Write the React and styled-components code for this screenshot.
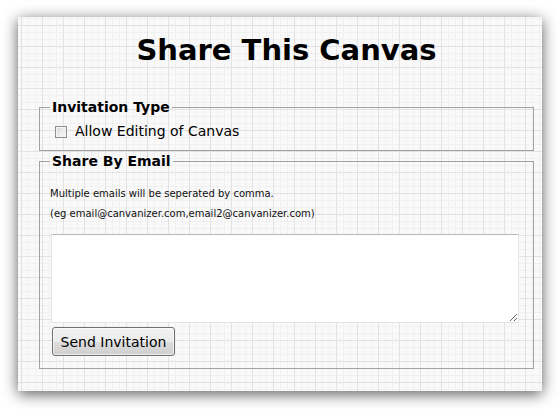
import React, { useState } from 'react';
import styled, { createGlobalStyle } from 'styled-components';

const GlobalStyle = createGlobalStyle`
  html, body {
    margin: 0;
    padding: 0;
    background: #ffffff;
  }
  body {
    font-family: "DejaVu Sans", Verdana, sans-serif;
    color: #000;
  }
`;

const Page = styled.div`
  width: 560px;
  height: 409px;
  padding: 17px 0 0 18px;
  box-sizing: border-box;
`;

const Panel = styled.div`
  width: 524px;
  height: 374px;
  box-sizing: border-box;
  padding: 15px 8px 0 21px;
  background-color: #f9f9f9;
  background-image:
    linear-gradient(to right, #e2e2e2 1px, transparent 1px),
    linear-gradient(to bottom, #e2e2e2 1px, transparent 1px),
    linear-gradient(to right, #f1f1f1 1px, transparent 1px),
    linear-gradient(to bottom, #f1f1f1 1px, transparent 1px);
  background-size: 21px 21px, 21px 21px, 7px 7px, 7px 7px;
  background-position: 3px 8px, 3px 8px, 3px 8px, 3px 8px;
  box-shadow: 0 3px 14px rgba(0, 0, 0, 0.65);
`;

const Title = styled.h1`
  margin: 0 0 31px;
  font-size: 29px;
  line-height: 36px;
  font-weight: bold;
  text-align: center;
`;

const Fieldset = styled.fieldset`
  margin: ${({ $gap }) => $gap || 0}px 0 0;
  padding: 0 10px ${({ $bottom }) => $bottom}px 10px;
  width: 495px;
  box-sizing: border-box;
  border: 1px solid #a2a2a2;
  min-width: 0;
`;

const Legend = styled.legend`
  padding: 0 2px;
  font-size: 14px;
  line-height: 16px;
  font-weight: bold;
`;

const CheckRow = styled.label`
  display: flex;
  align-items: center;
  margin-top: 8px;
  height: 16px;
  font-size: 14px;
  line-height: 16px;
  cursor: pointer;
`;

const Box = styled.span`
  width: 12px;
  height: 12px;
  box-sizing: border-box;
  margin: 1px 8px 0 5px;
  border: 1px solid #8e8f8f;
  background: linear-gradient(135deg, #d6d6d6 0%, #ececec 55%, #fafafa 100%);
  box-shadow: inset 0 0 0 1px #f4f4f4;
`;

const Note = styled.p`
  margin: ${({ $top }) => $top}px 0 0 0;
  font-size: 10px;
  line-height: 20px;
  color: #111;
`;

const Emails = styled.textarea`
  display: block;
  margin: 10px 0 0 1px;
  width: 468px;
  height: 89px;
  box-sizing: border-box;
  border: 1px solid #e3e6ea;
  border-top-color: #b5b7bb;
  background: #fff;
  font-family: "DejaVu Sans", Verdana, sans-serif;
  font-size: 12px;
  outline: none;
`;

const SendButton = styled.button`
  display: block;
  margin: 4px 0 0 2px;
  width: 123px;
  height: 29px;
  padding: 0;
  border: 1px solid #707070;
  border-radius: 3px;
  background: linear-gradient(to bottom, #f2f2f2 0%, #ebebeb 50%, #dddddd 51%, #cfcfcf 100%);
  box-shadow: inset 0 0 0 1px rgba(255, 255, 255, 0.6);
  font-family: "DejaVu Sans", Verdana, sans-serif;
  font-size: 14px;
  color: #000;
  cursor: pointer;
`;

export default function App() {
  const [emails, setEmails] = useState('');
  const [canEdit, setCanEdit] = useState(false);

  return (
    <Page>
      <GlobalStyle />
      <Panel>
        <Title>Share This Canvas</Title>
        <Fieldset $bottom={11}>
          <Legend>Invitation Type</Legend>
          <CheckRow onClick={() => setCanEdit(!canEdit)}>
            <Box />
            Allow Editing of Canvas
          </CheckRow>
        </Fieldset>
        <Fieldset $gap={2} $bottom={12}>
          <Legend>Share By Email</Legend>
          <Note $top={15}>Multiple emails will be seperated by comma.</Note>
          <Note $top={0}>(eg email@canvanizer.com,email2@canvanizer.com)</Note>
          <Emails value={emails} onChange={(e) => setEmails(e.target.value)} />
          <SendButton>Send Invitation</SendButton>
        </Fieldset>
      </Panel>
    </Page>
  );
}
